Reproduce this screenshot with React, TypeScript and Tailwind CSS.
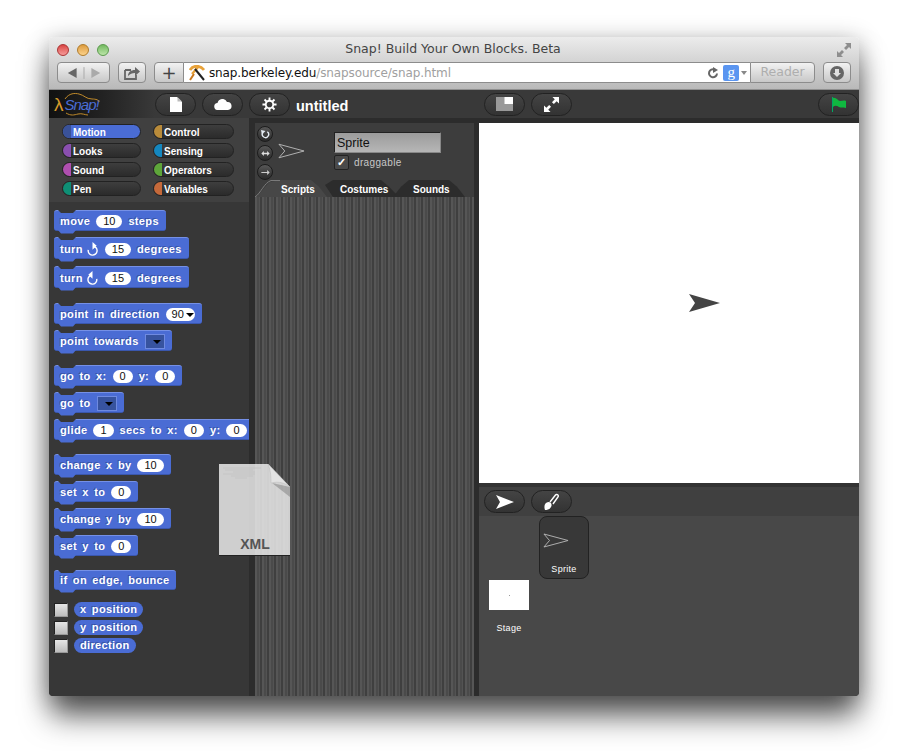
import type { ReactNode } from "react";

const BLOCK = "bg-[#4a6cd4]";

function Num({ v }: { v: string }) {
  return (
    <span className="flex h-[13px] items-center justify-center rounded-full bg-white px-[7px] font-normal text-[11px] tracking-normal text-[#111] [text-shadow:none]">
      {v}
    </span>
  );
}

function Arrow() {
  return <span className="ml-[2px] h-0 w-0 border-x-[4px] border-t-[4px] border-x-transparent border-t-black" />;
}

function Drop({ v }: { v: string }) {
  return (
    <span className="flex h-[13px] items-center rounded-full bg-white pl-[6px] pr-[1px] font-normal text-[11px] tracking-normal text-[#111] [text-shadow:none]">
      {v}
      <Arrow />
    </span>
  );
}

function Slot() {
  return (
    <span className="flex h-[15px] w-[20px] items-center justify-end border border-[#6f8ae0] bg-[#37539f] pr-[3px]">
      <span className="h-0 w-0 border-x-[4px] border-t-[4px] border-x-transparent border-t-black" />
    </span>
  );
}

function TurnIcon({ left }: { left?: boolean }) {
  return (
    <svg viewBox="0 0 14 16" className={`h-[16px] w-[13px] ${left ? "-scale-x-100" : ""}`} fill="none">
      <path d="M7.5 5A4.8 4.8 0 1 1 2.4 9" stroke="white" strokeWidth="1.5" />
      <path d="M7 0.5 L11.5 4.6 L7 8.7 Z" fill="white" />
    </svg>
  );
}

function Block({ children, tall, short, className = "" }: { children: ReactNode; tall?: boolean; short?: boolean; className?: string }) {
  return (
    <div
      className={`relative flex w-fit shrink-0 items-center gap-[6px] rounded-[3px] border-t border-t-[#7590e6] border-b border-b-[#3a57ae] pl-[6px] pr-[7px] font-bold text-[11px] tracking-[0.35px] whitespace-nowrap text-white [text-shadow:-1px_-1px_0_rgba(20,30,70,0.35)] [word-spacing:2px] ${BLOCK} ${
        tall ? "h-[22px] pt-[2px]" : short ? "h-[20px]" : "h-[21px] pt-[2px]"
      } ${className}`}
    >
      <svg viewBox="0 0 18 3" className="absolute -top-px left-[4px] h-[3px] w-[18px]">
        <polygon points="0,0 18,0 15,3 3,3" fill="#373737" />
      </svg>
      {children}
      <svg viewBox="0 0 18 4" className="absolute -bottom-[4px] left-[4px] h-[4px] w-[18px]">
        <polygon points="0,0 18,0 15,3.5 3,3.5" fill="#4a6cd4" />
      </svg>
    </div>
  );
}

function Reporter({ label }: { label: string }) {
  return (
    <div className="flex h-[15px] items-center gap-[6px]">
      <span className="h-[14px] w-[14px] border border-t-[#222] border-l-[#222] border-r-[#999] border-b-[#999] bg-gradient-to-b from-[#e6e6e6] to-[#bcbcbc]" />
      <span className={`flex h-[15px] items-center rounded-full px-[6px] font-bold text-[11px] tracking-[0.35px] text-white [text-shadow:-1px_-1px_0_rgba(20,30,70,0.35)] [word-spacing:2px] ${BLOCK}`}>
        {label}
      </span>
    </div>
  );
}

function Category({ label, color, active }: { label: string; color: string; active?: boolean }) {
  return (
    <div
      className={`flex h-[15px] overflow-hidden rounded-full border border-[#222] font-bold text-[10px] leading-[15px] text-white ${
        active ? "bg-[#4a6cd4]" : "bg-gradient-to-b from-[#3e3e3e] to-[#2b2b2b]"
      }`}
    >
      <span className={`w-[8px] shrink-0 ${color}`} />
      <span className="pl-[2px]">{label}</span>
    </div>
  );
}

function Pill({ children, className = "" }: { children: ReactNode; className?: string }) {
  return (
    <div
      className={`flex h-[23px] w-[41px] shrink-0 items-center justify-center rounded-full border border-[#222] bg-gradient-to-b from-[#444] to-[#333] ${className}`}
    >
      {children}
    </div>
  );
}

function ChromeBtn({ children, className = "" }: { children: ReactNode; className?: string }) {
  return (
    <div className={`flex h-[21px] items-center justify-center rounded-[4px] border border-[#8c8c8c] bg-gradient-to-b from-[#f2f2f2] to-[#c8c8c8] ${className}`}>
      {children}
    </div>
  );
}

function SpriteArrow({ className = "" }: { className?: string }) {
  return (
    <svg viewBox="0 0 28 16" className={className} fill="none">
      <polygon points="1,1 27,8 1,15 7,8" stroke="#b5b5b5" strokeWidth="1" />
    </svg>
  );
}

function RotBtn({ children }: { children: ReactNode }) {
  return (
    <div className="flex h-[16px] w-[16px] items-center justify-center rounded-full border border-[#1c1c1c] bg-gradient-to-b from-[#585858] to-[#2a2a2a]">
      {children}
    </div>
  );
}

export default function App() {
  return (
    <div className="h-[751px] w-[909px] overflow-hidden bg-white pl-[49px] pt-[37px] font-['Liberation_Sans',Arial,sans-serif]">
      <div className="relative flex h-[659px] w-[810px] flex-col rounded-[4px] shadow-[0_22px_30px_-2px_rgba(0,0,0,0.62),0_4px_24px_rgba(0,0,0,0.3)]">
        {/* browser chrome */}
        <div className="h-[53px] shrink-0 rounded-t-[4px] border-b border-b-[#8f8f8f] bg-gradient-to-b from-[#ececec] to-[#b9b9b9] font-['DejaVu_Sans',sans-serif]">
          <div className="relative flex h-[25px] items-center px-[8px]">
            <div className="flex gap-[8px]">
              <span className="h-[12px] w-[12px] rounded-full border border-[#a33] bg-gradient-to-b from-[#d94242] to-[#f59a9a]" />
              <span className="h-[12px] w-[12px] rounded-full border border-[#b07b2a] bg-gradient-to-b from-[#dd9b3c] to-[#fbd28a]" />
              <span className="h-[12px] w-[12px] rounded-full border border-[#5b9a4d] bg-gradient-to-b from-[#72b95f] to-[#bce5a9]" />
            </div>
            <div className="flex-1 pr-[40px] text-center text-[12.5px] text-[#444]">Snap! Build Your Own Blocks. Beta</div>
            <svg viewBox="0 0 14 14" className="h-[14px] w-[14px]" fill="#8e8e8e">
              <polygon points="8,0 14,0 14,6 12,4 9,7 7,5 10,2" />
              <polygon points="0,14 0,8 2,10 5,7 7,9 4,12 6,14" />
            </svg>
          </div>
          <div className="flex items-center pl-[8px] pr-[8px]">
            <ChromeBtn className="w-[53px]">
              <svg viewBox="0 0 52 12" className="h-[12px] w-[52px]">
                <polygon points="19,1 19,11 10,6" fill="#666" />
                <rect x="26" y="0" width="1" height="12" fill="#aaa" />
                <polygon points="34,1 34,11 43,6" fill="#aaa" />
              </svg>
            </ChromeBtn>
            <ChromeBtn className="ml-[8px] w-[28px]">
              <svg viewBox="0 0 18 14" className="h-[14px] w-[18px]" fill="none">
                <path d="M2 4h6M2 4v9h11v-4" stroke="#666" strokeWidth="1.8" />
                <path d="M5 10c0-4 3-6 7-6V1l5 4.5L12 10V7c-3 0-5 1-7 3z" fill="#666" />
              </svg>
            </ChromeBtn>
            <ChromeBtn className="ml-[8px] w-[30px] rounded-r-none">
              <span className="text-[18px] leading-none text-[#444]">+</span>
            </ChromeBtn>
            <div className="flex h-[21px] w-[567px] items-center border-y border-y-[#8c8c8c] bg-white pl-[5px] pr-[3px]">
              <svg viewBox="0 0 16 16" className="h-[16px] w-[16px]" fill="none">
                <path d="M1 5C4 0 11 0 15 5" stroke="#e8a23a" strokeWidth="2.8" />
                <path d="M10 1 L3 9" stroke="#e8a23a" strokeWidth="2.4" />
                <path d="M6 4 L15 15" stroke="#222" strokeWidth="2" />
                <path d="M5 9 L1 15" stroke="#c9781d" strokeWidth="2" />
              </svg>
              <span className="ml-[4px] flex-1 text-[12px] tracking-[-0.1px] text-[#111]">
                snap.berkeley.edu<span className="text-[#a0a0a0]">/snapsource/snap.html</span>
              </span>
              <svg viewBox="0 0 12 12" className="h-[12px] w-[12px]" fill="none">
                <path d="M10 6.5A4 4 0 1 1 7.5 2.5" stroke="#666" strokeWidth="2" />
                <polygon points="6,0 11,3 6,6" fill="#666" />
              </svg>
              <span className="ml-[4px] flex h-[16px] w-[16px] items-center justify-center rounded-[2px] bg-[#5a95f0] font-['Liberation_Serif',serif] text-[15px] leading-none text-white">
                g
              </span>
              <span className="ml-[2px] h-0 w-0 border-x-[3px] border-t-[4px] border-x-transparent border-t-[#888]" />
            </div>
            <ChromeBtn className="w-[65px] rounded-l-none">
              <span className="text-[12.5px] text-[#aeaeae]">Reader</span>
            </ChromeBtn>
            <ChromeBtn className="ml-[8px] w-[28px]">
              <svg viewBox="0 0 14 14" className="h-[14px] w-[14px]">
                <circle cx="7" cy="7" r="7" fill="#666" />
                <polygon points="5,3 9,3 9,7 11,7 7,11 3,7 5,7" fill="#e0e0e0" />
              </svg>
            </ChromeBtn>
          </div>
        </div>

        {/* snap toolbar */}
        <div className="flex h-[28px] shrink-0 items-center bg-[#393939]">
          <div className="relative flex h-full w-[106px] shrink-0 items-center bg-gradient-to-r from-[#111] via-[#222] to-[#393939] pl-[5px]">
            <span className="text-[19px] leading-none text-[#d89a2b]">λ</span>
            <span className="ml-px text-[15px] italic leading-none tracking-[-1px] text-[#4a6cd4]">Snap!</span>
            <svg viewBox="0 0 42 26" className="absolute left-[14px] top-[1px] h-[26px] w-[42px]" fill="none">
              <path d="M2 8C6 2 12 2 16 3c5 1 7 5 13 5 4 0 7 1 7 3" stroke="#c08a2a" strokeWidth="1" />
              <path d="M3 22c5 3 8 2 12 1 4-1 7 1 10 1" stroke="#c08a2a" strokeWidth="1" />
            </svg>
          </div>
          <div className="flex items-center gap-[6px]">
            <Pill>
              <svg viewBox="0 0 12 15" className="h-[15px] w-[12px]">
                <polygon points="0,0 7,0 12,5 12,15 0,15" fill="white" />
                <polygon points="7.5,0 12,4.5 7.5,4.5" fill="#bbb" />
              </svg>
            </Pill>
            <Pill>
              <svg viewBox="0 0 18 11" className="h-[11px] w-[18px]">
                <path d="M4 11a3.5 3.5 0 0 1-.5-7A5 5 0 0 1 13 3a4 4 0 0 1 1 8z" fill="white" />
              </svg>
            </Pill>
            <Pill>
              <svg viewBox="0 0 16 16" className="h-[15px] w-[15px]" fill="none">
                <circle cx="8" cy="8" r="4" stroke="white" strokeWidth="2" />
                <path d="M8 0.5v3M8 12.5v3M0.5 8h3M12.5 8h3M2.7 2.7l2.1 2.1M11.2 11.2l2.1 2.1M2.7 13.3l2.1-2.1M11.2 4.8l2.1-2.1" stroke="white" strokeWidth="2" />
              </svg>
            </Pill>
          </div>
          <span className="ml-[6px] w-[52px] pt-[3px] text-[14.5px] leading-[18px] font-bold text-white">untitled</span>
          <Pill className="ml-[136px]">
            <svg viewBox="0 0 17 14" className="h-[14px] w-[17px]">
              <rect width="17" height="14" fill="#999" />
              <rect x="8.5" width="8.5" height="7" fill="white" />
            </svg>
          </Pill>
          <Pill className="ml-[6px]">
            <svg viewBox="0 0 16 16" className="h-[15px] w-[15px]" fill="white">
              <polygon points="9,0 16,0 16,7 13.5,4.5 10.5,7.5 8.5,5.5 11.5,2.5" />
              <polygon points="0,16 0,9 2.5,11.5 5.5,8.5 7.5,10.5 4.5,13.5 7,16" />
            </svg>
          </Pill>
          <Pill className="ml-auto">
            <svg viewBox="0 0 16 15" className="h-[15px] w-[16px]">
              <path d="M1 0h1v15H1z" fill="#0a6" />
              <path d="M2 1c3-1 5 3 7 3s4-1 6 0v7c-3-1-5 0-7-1S4 8 2 10z" fill="#10b840" />
            </svg>
          </Pill>
        </div>

        {/* ide */}
        <div className="flex min-h-0 flex-1 overflow-hidden rounded-b-[4px] bg-[#2c2c2c]">
          {/* palette */}
          <div className="flex w-[200px] shrink-0 flex-col bg-[#373737]">
            <div className="grid h-[84px] shrink-0 grid-cols-[79px_81px] content-start gap-x-[12px] gap-y-[4px] bg-[#404040] pl-[13px] pt-[6px]">
              <Category label="Motion" color="bg-[#3a5298]" active />
              <Category label="Control" color="bg-[#b98b3a]" />
              <Category label="Looks" color="bg-[#8a4fb0]" />
              <Category label="Sensing" color="bg-[#1487bf]" />
              <Category label="Sound" color="bg-[#b04fb0]" />
              <Category label="Operators" color="bg-[#5ea63a]" />
              <Category label="Pen" color="bg-[#0e8f75]" />
              <Category label="Variables" color="bg-[#c5693a]" />
            </div>
            <div className="flex min-h-0 flex-1 flex-col overflow-hidden pl-[5px] pt-[8px]">
              <div className="mb-[15px] flex flex-col gap-[6px]">
                <Block>
                  move <Num v="10" /> steps
                </Block>
                <Block tall>
                  <span className="flex items-center gap-[3px]">turn <TurnIcon /></span>
                  <Num v="15" /> degrees
                </Block>
                <Block tall className="mt-px">
                  <span className="flex items-center gap-[3px]">turn <TurnIcon left /></span>
                  <Num v="15" /> degrees
                </Block>
              </div>
              <div className="mb-[14px] flex flex-col gap-[6px]">
                <Block>
                  point in direction <Drop v="90" />
                </Block>
                <Block>
                  point towards <Slot />
                </Block>
              </div>
              <div className="mb-[14px] flex flex-col gap-[6px]">
                <Block>
                  go to x: <Num v="0" /> y: <Num v="0" />
                </Block>
                <Block>
                  go to <Slot />
                </Block>
                <Block>
                  glide <Num v="1" /> secs to x: <Num v="0" /> y: <Num v="0" />
                </Block>
              </div>
              <div className="mb-[14px] flex flex-col gap-[6px]">
                <Block>
                  change x by <Num v="10" />
                </Block>
                <Block>
                  set x to <Num v="0" />
                </Block>
                <Block>
                  change y by <Num v="10" />
                </Block>
                <Block>
                  set y to <Num v="0" />
                </Block>
              </div>
              <Block short>if on edge, bounce</Block>
              <div className="mt-[12px] flex flex-col gap-[3px]">
                <Reporter label="x position" />
                <Reporter label="y position" />
                <Reporter label="direction" />
              </div>
            </div>
          </div>

          {/* sprite + scripts */}
          <div className="ml-[6px] flex w-[219px] shrink-0 flex-col pt-[5px]">
            <div className="flex h-[74px] shrink-0 flex-col bg-[#3d3d3d]">
              <div className="flex h-[57px] shrink-0 pl-[2px] pt-[3px]">
                <div className="flex flex-col gap-[3px]">
                  <RotBtn>
                    <svg viewBox="0 0 10 10" className="h-[9px] w-[9px]" fill="none">
                      <path d="M2 3A3.5 3.5 0 1 0 7 2" stroke="#e4ecf4" strokeWidth="1.5" />
                      <polygon points="0,0 5,1 1,5" fill="#e4ecf4" />
                    </svg>
                  </RotBtn>
                  <RotBtn>
                    <svg viewBox="0 0 10 6" className="h-[5px] w-[9px]" fill="#ddd">
                      <path d="M0 3l3-3v2h4V0l3 3-3 3V4H3v2z" />
                    </svg>
                  </RotBtn>
                  <RotBtn>
                    <svg viewBox="0 0 10 6" className="h-[5px] w-[9px]" fill="#ccc">
                      <path d="M0 2.5h7V0l3 3-3 3V3.5H0z" />
                    </svg>
                  </RotBtn>
                </div>
                <SpriteArrow className="ml-[5px] mt-[17px] h-[16px] w-[27px]" />
                <div className="ml-[29px] flex flex-col pt-[6px]">
                  <div className="flex h-[21px] w-[107px] items-center border border-t-[#222] border-l-[#222] border-r-[#888] border-b-[#888] bg-gradient-to-b from-[#9c9c9c] to-[#b6b6b6] pl-[2px] pt-[2px] text-[12.5px] text-[#111]">
                    Sprite
                  </div>
                  <div className="mt-[2px] flex items-center">
                    <span className="flex h-[15px] w-[15px] items-center justify-center rounded-[2px] border border-[#222] bg-[#4a4a4a] text-[11px] font-bold leading-none text-white">
                      ✓
                    </span>
                    <span className="ml-[5px] text-[10px] tracking-[0.35px] text-[#c8c8c8]">draggable</span>
                  </div>
                </div>
              </div>
              <div className="relative flex h-[17px] shrink-0 text-[10px] font-bold leading-[19px] text-white">
                <div className="z-10 w-[72px] bg-[#474747] pl-[26px] [clip-path:polygon(0_100%,6px_70%,14px_15%,24px_0,56px_0,64px_40%,72px_100%)]">
                  Scripts
                </div>
                <div className="-ml-[2px] w-[74px] bg-[#2c2c2c] pl-[15px] [clip-path:polygon(0_30%,8px_0,56px_0,64px_40%,74px_100%,8px_100%)]">
                  Costumes
                </div>
                <div className="-ml-[6px] w-[72px] bg-[#2c2c2c] pl-[20px] [clip-path:polygon(0_100%,8px_40%,16px_0,56px_0,64px_40%,72px_100%)]">
                  Sounds
                </div>
                <svg viewBox="0 0 26 17" className="absolute left-0 top-0 z-20 h-[17px] w-[26px]" fill="none">
                  <path d="M0 17C6 13 9 3 16 0.5H25" stroke="#7a7a7a" strokeWidth="1" />
                </svg>
              </div>
            </div>
            <div className="min-h-0 flex-1 bg-[repeating-linear-gradient(90deg,#565656_0px,#565656_2px,#4a4a4a_2px,#4a4a4a_4px,#535353_4px,#535353_5px,#3f3f3f_5px,#3f3f3f_7px)]" />
          </div>

          {/* stage + corral */}
          <div className="ml-[5px] flex w-[380px] shrink-0 flex-col pt-[5px]">
            <div className="relative h-[360px] shrink-0 bg-white">
              <svg viewBox="0 0 31 18" className="absolute left-[210px] top-[171px] h-[18px] w-[31px]">
                <polygon points="0,0 31,9 0,18 6,9" fill="#444" />
              </svg>
            </div>
            <div className="h-[4px] shrink-0 bg-[#333]" />
            <div className="flex h-[29px] shrink-0 items-center gap-[6px] bg-[#404040] pl-[5px]">
              <Pill>
                <svg viewBox="0 0 18 14" className="h-[14px] w-[18px]">
                  <polygon points="0,0 18,7 0,14 4,7" fill="white" />
                </svg>
              </Pill>
              <Pill>
                <svg viewBox="0 0 16 18" className="h-[18px] w-[16px]">
                  <path d="M1 17c-1.500-4 0-8 3.500-8 2.500 0 4 2.500 2.500 5-1.200 2.500-3.500 3-6 3z" fill="white" />
                  <path d="M6 9l5.500-7c1-1.200 3.200-.2 2.800 1.500L9 11" fill="none" stroke="white" strokeWidth="1.4" />
                </svg>
              </Pill>
            </div>
            <div className="min-h-0 flex-1 bg-[#484848] text-[9px] text-white">
              <div className="ml-[60px] flex h-[63px] w-[50px] flex-col rounded-[8px] border border-[#222] bg-[#383838] pt-[15px] tracking-[0.3px]">
                <SpriteArrow className="ml-[3px] h-[17px] w-[26px]" />
                <span className="mt-[14px] text-center">Sprite</span>
              </div>
              <div className="ml-[10px] mt-px flex w-[40px] flex-col items-center tracking-[0.3px]">
                <div className="flex h-[30px] w-[40px] items-center justify-center bg-white">
                  <span className="h-px w-px bg-[#999]" />
                </div>
                <span className="mt-[12px]">Stage</span>
              </div>
            </div>
          </div>
        </div>

        {/* xml drag preview */}
        <div className="absolute left-[170px] top-[426px] flex h-[93px] w-[72px] items-end justify-center">
          <svg viewBox="0 0 72 93" className="absolute inset-0 h-[93px] w-[72px]">
            <polygon points="0,1 49,1 71,24 71,92 0,92" fill="rgba(236,236,236,0.84)" />
            <polygon points="0,92 71,92 71,93 0,93" fill="#222" />
            <polygon points="53,20 71,24 71,34" fill="rgba(90,90,90,0.35)" />
            <path d="M49 1C52 8 52 15 52 20C60 18 66 20 71 24Z" fill="#e2e2e2" stroke="#bbb" strokeWidth="0.5" />
            <path d="M4 5h38M6 7h28M14 9h22M4 11h32M12 13h22M16 15h12" stroke="#bbb" strokeWidth="0.5" />
          </svg>
          <span className="relative pb-[1px] text-[14px] font-bold text-[#555]">XML</span>
        </div>
      </div>
    </div>
  );
}
